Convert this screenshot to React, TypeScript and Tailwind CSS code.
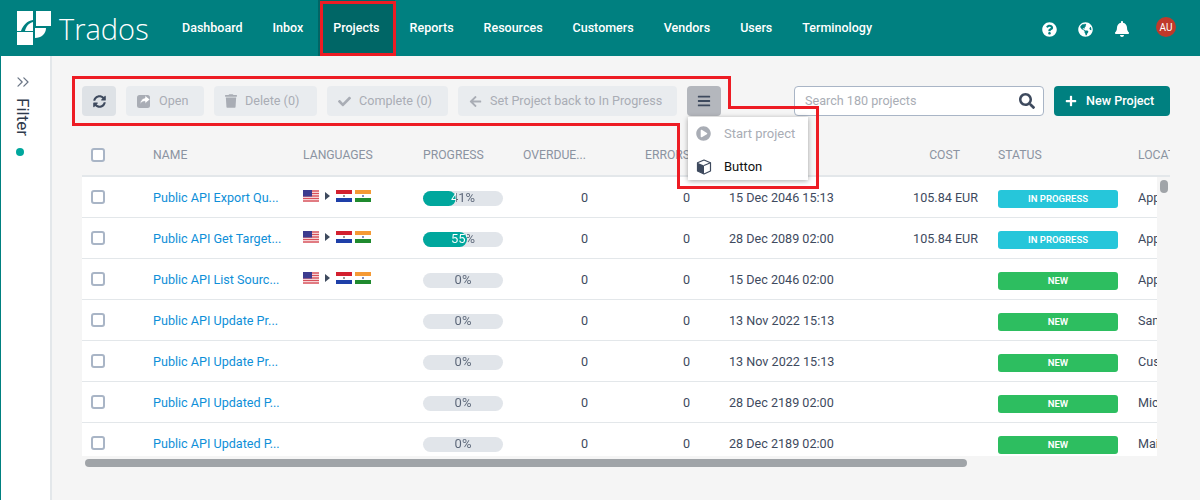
import { ChevronsRight } from "lucide-react";
import {
	FaArrowLeft,
	FaBars,
	FaBell,
	FaCheck,
	FaGlobeAmericas,
	FaPlayCircle,
	FaPlus,
	FaQuestionCircle,
	FaSearch,
	FaSyncAlt,
	FaTrash,
} from "react-icons/fa";

const navItems = ["Dashboard", "Inbox", "Projects", "Reports", "Resources", "Customers", "Vendors", "Users", "Terminology"];

const rows = [
	{ name: "Public API Export Qu...", flags: true, progress: 41, date: "15 Dec 2046 15:13", cost: "105.84 EUR", status: "IN PROGRESS", loc: "Apple" },
	{ name: "Public API Get Target...", flags: true, progress: 55, date: "28 Dec 2089 02:00", cost: "105.84 EUR", status: "IN PROGRESS", loc: "Apple" },
	{ name: "Public API List Sourc...", flags: true, progress: 0, date: "15 Dec 2046 02:00", cost: "", status: "NEW", loc: "Apple" },
	{ name: "Public API Update Pr...", flags: false, progress: 0, date: "13 Nov 2022 15:13", cost: "", status: "NEW", loc: "Sample" },
	{ name: "Public API Update Pr...", flags: false, progress: 0, date: "13 Nov 2022 15:13", cost: "", status: "NEW", loc: "Custom" },
	{ name: "Public API Updated P...", flags: false, progress: 0, date: "28 Dec 2189 02:00", cost: "", status: "NEW", loc: "Micro" },
	{ name: "Public API Updated P...", flags: false, progress: 0, date: "28 Dec 2189 02:00", cost: "", status: "NEW", loc: "Main" },
];

const gridCols = "grid grid-cols-[71px_150px_120px_100px_122px_84px_140px_109px_160px_60px] items-center";

const Logo = () => (
	<svg width="35" height="35" viewBox="0 0 35 35" fill="#fff">
		<path d="M0 0H16V9C10 10 6 14 4 20H0Z" />
		<path d="M8 20C9 15 12 12 16 11V20Z" />
		<path d="M19 0H34V15H19Z" />
		<path d="M0 21H16V34H0Z" />
		<path d="M18 17H29C29 23 24 27 18 27Z" />
	</svg>
);

const OpenIcon = () => (
	<svg width="14" height="14" viewBox="0 0 14 14">
		<rect x="0" y="1" width="13" height="13" rx="2.5" fill="#a9adb5" />
		<path d="M8 1.5L13 5.5L8 9.5V7.3C5.8 7.3 4.2 8.2 3.2 10.3C3.2 7 5 4.4 8 3.9Z" fill="#fff" stroke="#a9adb5" strokeWidth="0.6" />
	</svg>
);

const CubeIcon = () => (
	<svg width="16" height="16" viewBox="0 0 16 16">
		<path d="M8 1L14.5 3.8V12L8 15L1.5 12V3.8Z" fill="#fff" stroke="#3e4a5e" strokeWidth="1.2" strokeLinejoin="round" />
		<path d="M1.5 3.8L8 6.6V15L1.5 12Z" fill="#3e4a5e" />
		<path d="M8 6.6L14.5 3.8" stroke="#3e4a5e" strokeWidth="1.1" />
	</svg>
);

const UsFlag = () => (
	<svg width="16" height="12" viewBox="0 0 16 12">
		<rect width="16" height="12" fill="#fff" />
		<path d="M0 1h16M0 3.5h16M0 6h16M0 8.5h16M0 11h16" stroke="#d8505a" strokeWidth="1.3" />
		<rect width="9" height="6.5" fill="#3c3b8f" />
	</svg>
);

const ParaguayFlag = () => (
	<svg width="16" height="12" viewBox="0 0 16 12">
		<rect width="16" height="4" fill="#d3202f" />
		<rect y="4" width="16" height="4" fill="#fff" />
		<rect y="8" width="16" height="4" fill="#1e3fa8" />
		<circle cx="8" cy="6" r="1" fill="#777" />
	</svg>
);

const IndiaFlag = () => (
	<svg width="16" height="12" viewBox="0 0 16 12">
		<rect width="16" height="4" fill="#f59a35" />
		<rect y="4" width="16" height="4" fill="#fff" />
		<rect y="8" width="16" height="4" fill="#1f8a2e" />
		<circle cx="8" cy="6" r="1" fill="#5a6aa8" />
	</svg>
);

const Checkbox = () => <div className="w-[14px] h-[14px] ml-[9px] rounded-[3px] border-2 border-[#a9b5c6] bg-white"></div>;

const ToolButton = ({ icon, label, w }: { icon: React.ReactNode; label: string; w: string }) => (
	<div className={`${w} h-[30px] rounded bg-[#e9ecef] text-[#a9adb5] flex items-center pl-[11px] gap-[8px]`}>
		{icon}
		<span>{label}</span>
	</div>
);

export default function App() {
	return (
		<div className="relative w-[1200px] h-[500px] overflow-hidden bg-[#f5f5f5] text-[12.6px] text-[#3e4a5e] font-['Roboto','Open_Sans',sans-serif]">
			{/* Top bar */}
			<header className="h-14 bg-[#008080] flex items-center text-white">
				<div className="w-[167px] pl-[17px] flex items-center gap-[7px]">
					<Logo />
					<span className="text-[29px] leading-none font-['Open_Sans',sans-serif] font-light">Trados</span>
				</div>
				<nav className="flex h-full text-[12.5px]">
					{navItems.map((item) => (
						<div key={item} className={`h-full flex items-center px-[15px] font-medium ${item === "Projects" ? "bg-[#006666]" : ""}`}>
							{item}
						</div>
					))}
				</nav>
				<div className="ml-auto flex items-center gap-[21px] pr-[24px] translate-y-px">
					<FaQuestionCircle className="w-[15px] h-[15px]" />
					<FaGlobeAmericas className="w-[15px] h-[15px]" />
					<FaBell className="w-[16px] h-[16px]" />
					<div className="w-5 h-5 ml-[5px] rounded-full bg-[#c0392b] flex items-center justify-center text-[10px] -translate-y-[2px]">AU</div>
				</div>
			</header>

			<div className="flex h-[444px]">
				{/* Filter sidebar */}
				<aside className="w-[52px] bg-white border-l border-l-[#008080] border-r-2 border-r-[#e3e7ea] flex flex-col items-start pl-[12px] pt-[16px]">
					<ChevronsRight className="w-5 h-5 text-[#6b7686]" strokeWidth={1.5} />
					<span className="[writing-mode:vertical-rl] text-[17px] leading-none mt-[6px] ml-px text-[#2f3a4c]">Filter</span>
					<span className="w-2 h-2 rounded-full bg-[#00a79d] mt-[12px] ml-[3px]"></span>
				</aside>

				<main className="flex-1 min-w-0 pl-[30px] pt-[30px]">
					{/* Toolbar */}
					<div className="flex items-center gap-[10px] h-[30px]">
						<div className="w-[34px] h-[30px] rounded bg-[#dee2e6] flex items-center justify-center">
							<FaSyncAlt className="w-[13px] h-[13px] text-[#3e4a5e]" />
						</div>
						<ToolButton w="w-[78px]" icon={<OpenIcon />} label="Open" />
						<ToolButton w="w-[103px]" icon={<FaTrash className="w-3 h-[14px]" />} label="Delete (0)" />
						<ToolButton w="w-[121px]" icon={<FaCheck className="w-[13px] h-[13px]" />} label="Complete (0)" />
						<ToolButton w="w-[219px]" icon={<FaArrowLeft className="w-[13px] h-[13px]" />} label="Set Project back to In Progress" />
						<div className="w-[34px] h-[30px] rounded bg-[#b4b7bd] flex items-center justify-center">
							<FaBars className="w-[14px] h-[14px] text-[#3e4a5e]" />
						</div>
						<div className="ml-[63px] w-[250px] h-[30px] rounded border border-[#a9b5c6] bg-white flex items-center justify-between px-[10px] pr-[8px]">
							<span className="text-[#a9adb5]">Search 180 projects</span>
							<FaSearch className="w-4 h-4 text-[#3e4a5e]" />
						</div>
						<div className="w-[116px] h-[30px] rounded bg-[#008080] text-white flex items-center pl-[11px] gap-[9px] font-medium">
							<FaPlus className="w-3 h-3" />
							<span>New Project</span>
						</div>
					</div>

					{/* Table */}
					<div className="mt-[18px] w-[1088px] h-[322px] overflow-hidden relative">
						<div className={`${gridCols} h-[43px] w-[1088px] border-b-2 border-[#e3e7ea] text-[#8b93a1] text-[12.2px]`}>
							<Checkbox />
							<span className="pt-[2px]">NAME</span>
							<span className="pt-[2px]">LANGUAGES</span>
							<span className="pt-[2px]">PROGRESS</span>
							<span className="pt-[2px]">OVERDUE...</span>
							<span className="pt-[2px]">ERRORS</span>
							<span></span>
							<span className="pt-[2px] text-right pr-[18px]">COST</span>
							<span className="pt-[2px] pl-5">STATUS</span>
							<span className="pt-[2px] whitespace-nowrap">LOCATION</span>
						</div>
						<div className="w-[1075px] overflow-hidden bg-white">
							{rows.map((row, i) => (
								<div key={i} className={`${gridCols} h-[41px] border-b border-[#e3e7ea]`}>
									<Checkbox />
									<span className="pt-[2px] text-[#0f8fd8] whitespace-nowrap">{row.name}</span>
									<div className="flex items-center -translate-y-px">
										{row.flags && (
											<>
												<UsFlag />
												<span className="mx-[6px] w-0 h-0 border-y-[4px] border-y-transparent border-l-[5px] border-l-[#3e4a5e]"></span>
												<ParaguayFlag />
												<span className="w-[3px]"></span>
												<IndiaFlag />
											</>
										)}
									</div>
									<div className="relative w-20 h-[15px] rounded-full bg-[#e1e5ea] translate-y-px">
										<div className="absolute inset-y-0 left-0 rounded-full bg-[#00a79d]" style={{ width: `${row.progress}%` }}></div>
										<span
											className="absolute inset-0 flex items-center justify-center text-[13px] text-transparent bg-clip-text"
											style={{ backgroundImage: `linear-gradient(90deg, #fff ${row.progress}%, #5a6577 ${row.progress}%)` }}
										>
											{row.progress}%
										</span>
									</div>
									<span className="pt-[2px] text-center pl-px">0</span>
									<span className="pt-[2px] text-center pr-px">0</span>
									<span className="pt-[2px] whitespace-nowrap">{row.date}</span>
									<span className="pt-[2px] text-right whitespace-nowrap">{row.cost}</span>
									<div className="pl-5 pt-1">
										<div className={`w-[120px] h-[18px] rounded-[3px] text-white text-[9.5px] font-semibold flex items-center justify-center ${row.status === "NEW" ? "bg-[#2dbe60]" : "bg-[#26c6da]"}`}>
											{row.status}
										</div>
									</div>
									<span className="pt-[2px] whitespace-nowrap overflow-hidden w-[19px]">{row.loc}</span>
								</div>
							))}
						</div>
						{/* Vertical scrollbar thumb */}
						<div className="absolute left-[1078px] top-[46px] w-2 h-[13px] rounded bg-[#a0a4a8]"></div>
					</div>

					{/* Horizontal scrollbar */}
					<div className="mt-[3px] ml-[3px] w-[882px] h-2 rounded bg-[#a0a4a8]"></div>
				</main>
			</div>

			{/* Actions dropdown */}
			<div className="absolute left-[688px] top-[117px] w-[120px] h-[63px] bg-white shadow-[0_1px_5px_rgba(0,0,0,0.35)] text-[13px]">
				<div className="h-[33px] flex items-center pl-2 gap-[13px] text-[#a9adb5]">
					<FaPlayCircle className="w-[15px] h-[15px]" />
					<span>Start project</span>
				</div>
				<div className="h-[33px] flex items-center pl-2 gap-[13px] text-[#111]">
					<CubeIcon />
					<span className="-ml-px">Button</span>
				</div>
			</div>

			{/* Red annotation marks */}
			<div className="absolute left-[320px] top-[1px] w-[76px] h-[55px] border-[3px] border-[#ed1c24]"></div>
			<svg className="absolute left-0 top-0 pointer-events-none" width="1200" height="500" fill="none">
				<path d="M73.5 77.5H729.5V107.5H817.5V187.5H678.5V124.5H73.5Z" stroke="#ed1c24" strokeWidth="3" />
			</svg>
		</div>
	);
}
